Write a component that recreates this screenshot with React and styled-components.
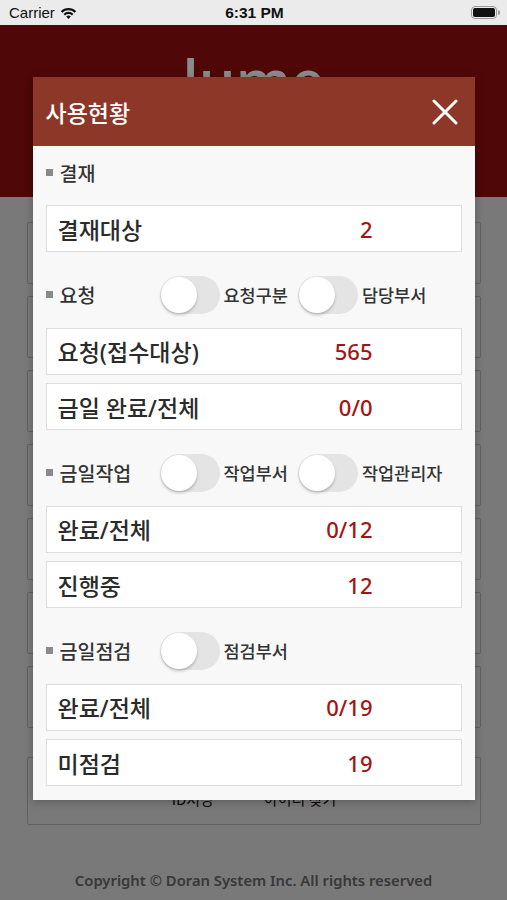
import React from 'react';
import styled, {createGlobalStyle} from 'styled-components';

const GlobalStyle = createGlobalStyle`
  html, body {
    margin: 0;
    padding: 0;
  }
  body {
    background: #dcdcdc;
    font-family: "Noto Sans", "Noto Sans CJK KR", sans-serif;
    overflow: hidden;
  }
  * {
    box-sizing: border-box;
  }
`;

const Screen = styled.div`
  display: flex;
  flex-direction: column;
  height: 900px;
  overflow: hidden;
  width: 507px;
`;

const StatusBar = styled.div`
  align-items: center;
  background: #ebebeb;
  color: #111;
  display: grid;
  flex: none;
  font-family: "Liberation Sans", sans-serif;
  grid-template-columns: 1fr auto 1fr;
  height: 25px;
  padding: 0 7px 0 9px;
`;

const Carrier = styled.div`
  align-items: center;
  display: flex;
  font-size: 15px;
  gap: 5px;
`;

const Clock = styled.div`
  font-size: 15.5px;
  font-weight: 700;
`;

const Battery = styled.div`
  display: flex;
  justify-content: flex-end;
`;

const AppArea = styled.div`
  display: flex;
  flex: 1;
  flex-direction: column;
  position: relative;
`;

const Header = styled.div`
  background: #900e0e;
  display: flex;
  flex: none;
  height: 172px;
  justify-content: center;
  padding-top: 26px;
`;

const Logo = styled.div`
  color: #fff;
  font-family: "Open Sans", sans-serif;
  font-size: 58px;
  font-weight: 600;
  line-height: 1;
`;

const CardList = styled.div`
  display: flex;
  flex-direction: column;
  gap: 12px;
  padding: 25px 26px 0 27px;
`;

const Card = styled.div`
  border: 1px solid #b2b2b2;
  border-radius: 2px;
  height: ${p => p.$h || 62}px;
  margin-top: ${p => p.$mt || 0}px;
`;

const CardText = styled.div`
  align-items: center;
  color: #111;
  display: flex;
  font-family: "Noto Sans CJK KR", sans-serif;
  font-size: 15px;
  gap: 50px;
  justify-content: center;
  padding-top: 30px;
`;

const Footer = styled.div`
  color: #666;
  font-size: 14.8px;
  font-weight: 600;
  margin-top: auto;
  padding-bottom: 10px;
  text-align: center;
`;

const Overlay = styled.div`
  align-items: flex-start;
  background: rgba(0, 0, 0, 0.45);
  display: flex;
  inset: 0;
  justify-content: center;
  padding-top: 52px;
  position: absolute;
`;

const Modal = styled.div`
  box-shadow: 0 2px 8px rgba(0, 0, 0, 0.25);
  width: 442px;
`;

const ModalHeader = styled.div`
  align-items: center;
  background: #8c3727;
  display: flex;
  height: 69px;
  justify-content: space-between;
  padding: 0 17px 0 13px;
`;

const Title = styled.div`
  color: #fff;
  font-family: "Noto Sans CJK KR", sans-serif;
  font-size: 23px;
  font-weight: 500;
`;

const CloseButton = styled.button`
  background: none;
  border: none;
  display: flex;
  padding: 0;
`;

const Body = styled.div`
  background: #f8f8f8;
  display: flex;
  flex-direction: column;
  gap: 23.5px;
  padding: 7px 13px 14px;
`;

const Section = styled.div`
  display: flex;
  flex-direction: column;
`;

const SectionHead = styled.div`
  align-items: center;
  display: flex;
  height: 38px;
  margin-bottom: 14px;
`;

const HeadLabel = styled.div`
  align-items: center;
  color: #333;
  display: flex;
  flex: none;
  font-family: "Noto Sans CJK KR", sans-serif;
  font-size: 19.5px;
  font-weight: 500;
  gap: 7px;
  width: 114px;

  &::before {
    background: #8a8a8a;
    content: "";
    height: 7px;
    width: 7px;
  }
`;

const Switch = styled.button`
  background: #e4e4e4;
  border: none;
  border-radius: 19px;
  flex: none;
  height: 38px;
  padding: 1px;
  width: 60px;

  span {
    background: #fff;
    border-radius: 50%;
    box-shadow: 0 2px 3px rgba(0, 0, 0, 0.22);
    display: block;
    height: 36px;
    width: 36px;
  }
`;

const SwitchLabel = styled.span`
  color: #333;
  font-family: "Noto Sans CJK KR", sans-serif;
  font-size: 17.5px;
  font-weight: 500;
  margin: 0 10px 0 4px;
`;

const Rows = styled.div`
  display: flex;
  flex-direction: column;
  gap: 8.5px;
`;

const Row = styled.div`
  align-items: center;
  background: #fff;
  border: 1px solid #dedede;
  display: flex;
  height: 47px;
  justify-content: space-between;
  padding: 0 88px 0 11px;
`;

const RowLabel = styled.span`
  color: #2b2b2b;
  font-size: 23px;
  font-weight: 500;
`;

const Value = styled.span`
  color: #a31515;
  font-size: 22px;
  font-weight: 500;
`;

const sections = [
  {title: '결재', toggles: [], rows: [['결재대상', '2']]},
  {title: '요청', toggles: ['요청구분', '담당부서'], rows: [['요청(접수대상)', '565'], ['금일 완료/전체', '0/0']]},
  {title: '금일작업', toggles: ['작업부서', '작업관리자'], rows: [['완료/전체', '0/12'], ['진행중', '12']]},
  {title: '금일점검', toggles: ['점검부서'], rows: [['완료/전체', '0/19'], ['미점검', '19']]}
];

const WifiIcon = () => (
  <svg width="17" height="12" viewBox="0 0 17 12">
    <path d="M0.8 4.2 A11 11 0 0 1 16.2 4.2 L14.6 5.8 A8.8 8.8 0 0 0 2.4 5.8 Z" fill="#111" />
    <path d="M3.5 6.9 A7 7 0 0 1 13.5 6.9 L11.9 8.5 A4.8 4.8 0 0 0 5.1 8.5 Z" fill="#111" />
    <path d="M6.2 9.6 A3.2 3.2 0 0 1 10.8 9.6 L8.5 11.9 Z" fill="#111" />
  </svg>
);

const BatteryIcon = () => (
  <svg width="29" height="13" viewBox="0 0 29 13">
    <rect x="0.5" y="0.5" width="25" height="12" rx="3.5" fill="none" stroke="#999" />
    <rect x="2" y="2" width="22" height="9" rx="2" fill="#111" />
    <path d="M27 4.3 a2 2 0 0 1 0 4.4 Z" fill="#999" />
  </svg>
);

const CloseIcon = () => (
  <svg width="26" height="26" viewBox="0 0 26 26">
    <path d="M2 2 L24 24 M24 2 L2 24" stroke="#fff" strokeWidth="3" strokeLinecap="round" />
  </svg>
);

export default function App() {
  return (
    <Screen>
      <GlobalStyle />
      <StatusBar>
        <Carrier>
          Carrier <WifiIcon />
        </Carrier>
        <Clock>6:31 PM</Clock>
        <Battery>
          <BatteryIcon />
        </Battery>
      </StatusBar>
      <AppArea>
        <Header>
          <Logo>lume</Logo>
        </Header>
        <CardList>
          {Array.from({length: 7}).map((_, i) => (
            <Card key={i} />
          ))}
          <Card $h={68} $mt={17}>
            <CardText>
              <span>ID저장</span>
              <span>아이디 찾기</span>
            </CardText>
          </Card>
        </CardList>
        <Footer>Copyright © Doran System Inc. All rights reserved</Footer>
        <Overlay>
          <Modal>
            <ModalHeader>
              <Title>사용현황</Title>
              <CloseButton aria-label="닫기">
                <CloseIcon />
              </CloseButton>
            </ModalHeader>
            <Body>
              {sections.map(s => (
                <Section key={s.title}>
                  <SectionHead>
                    <HeadLabel>{s.title}</HeadLabel>
                    {s.toggles.map(t => (
                      <React.Fragment key={t}>
                        <Switch role="switch" aria-checked="false">
                          <span />
                        </Switch>
                        <SwitchLabel>{t}</SwitchLabel>
                      </React.Fragment>
                    ))}
                  </SectionHead>
                  <Rows>
                    {s.rows.map(([label, value]) => (
                      <Row key={label}>
                        <RowLabel>{label}</RowLabel>
                        <Value>{value}</Value>
                      </Row>
                    ))}
                  </Rows>
                </Section>
              ))}
            </Body>
          </Modal>
        </Overlay>
      </AppArea>
    </Screen>
  );
}
